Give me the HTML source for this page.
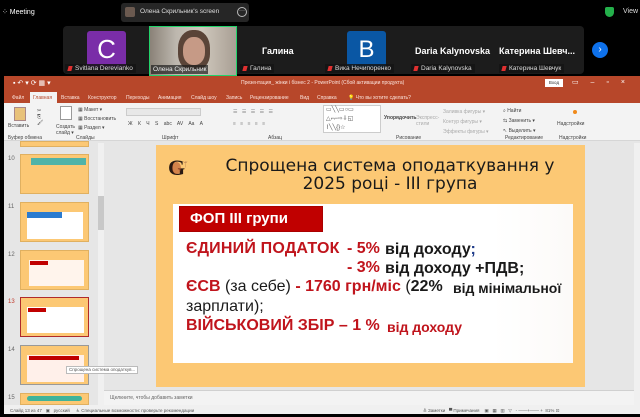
<!DOCTYPE html>
<html><head><meta charset="utf-8"><style>
*{margin:0;padding:0;box-sizing:border-box}
body{width:640px;height:417px;background:#000;overflow:hidden;position:relative;font-family:"Liberation Sans","DejaVu Sans",sans-serif}
.a{position:absolute;white-space:nowrap}
.w{color:#fff}
.lbl{position:absolute;height:9px;background:rgba(20,20,20,.85);color:#ddd;font-size:6.5px;line-height:9px;padding:0 3px 0 10px}
.lbl:before{content:"";position:absolute;left:3px;top:2px;width:4px;height:5px;background:#e03030;transform:skewX(-15deg)}
.tab{position:absolute;top:95px;font-size:5px;color:#fbe3dc}
.rb{position:absolute;font-size:5px;color:#444}
.th{position:absolute;left:20px;width:69px;height:40px;background:#fcc874;border:1px solid #e0b060}
.num{position:absolute;left:8px;font-size:6px;color:#666}
.st{position:absolute;top:408px;font-size:4.5px;color:#555}
.r{color:#c0141c;font-weight:bold;font-size:16px}
.k{color:#1a1a1a;font-weight:bold;font-size:15px}
</style></head><body>
<!-- top bar -->
<div class="a w" style="left:2px;top:8px;font-size:7px">⁘ Meeting</div>
<div class="a" style="left:121px;top:3px;width:128px;height:19px;background:#262626;border-radius:3px"></div>
<div class="a" style="left:125px;top:7px;width:10px;height:10px;background:#6b5a50;border-radius:2px"></div>
<div class="a" style="left:140px;top:8px;font-size:6.5px;color:#ddd">Олена Скрильник's screen</div>
<div class="a" style="left:237px;top:7px;width:10px;height:10px;border:1px solid #bbb;border-radius:50%;font-size:6px;color:#ccc;line-height:7px;text-align:center">···</div>
<div class="a" style="left:605px;top:7px;width:9px;height:10px;background:#24b04b;border-radius:2px 2px 5px 5px"></div>
<div class="a" style="left:623px;top:8px;font-size:7px;color:#ddd">View</div>
<!-- participant strip -->
<div class="a" style="left:63px;top:26px;width:521px;height:48px;background:#1c1c1c;border-radius:4px"></div>
<div class="a" style="left:87px;top:31px;width:39px;height:37px;background:#7a2da8;border-radius:3px;color:#fff;font-size:26px;text-align:center;line-height:37px">C</div>
<div class="lbl" style="left:65px;top:64px">Svitlana Derevianko</div>
<div class="a" style="left:149px;top:26px;width:88px;height:50px;border:1.5px solid #22d36a;background:linear-gradient(90deg,#8a8278 0%,#bdb7ae 30%,#cfc8bd 60%,#a99f94 100%)"></div>
<div class="a" style="left:178px;top:30px;width:32px;height:40px;background:#5a4438;border-radius:45% 45% 40% 40%"></div>
<div class="a" style="left:183px;top:37px;width:22px;height:28px;background:#c69a86;border-radius:45%"></div>
<div class="a" style="left:151px;top:65px;height:9px;font-size:6.5px;line-height:9px;color:#eee;background:rgba(30,30,30,.7);padding:0 2px">Олена Скрильник</div>
<div class="a w" style="left:262px;top:46px;font-size:9px;font-weight:bold">Галина</div>
<div class="lbl" style="left:240px;top:64px">Галина</div>
<div class="a" style="left:347px;top:31px;width:39px;height:37px;background:#0a57a4;border-radius:3px;color:#fff;font-size:24px;text-align:center;line-height:37px">B</div>
<div class="lbl" style="left:325px;top:64px">Вика Нечипоренко</div>
<div class="a w" style="left:415px;top:46px;font-size:9px;font-weight:bold">Daria Kalynovska</div>
<div class="lbl" style="left:411px;top:64px">Daria Kalynovska</div>
<div class="a w" style="left:499px;top:46px;font-size:9px;font-weight:bold">Катерина Шевч...</div>
<div class="lbl" style="left:499px;top:64px">Катерина Шевчук</div>
<div class="a" style="left:592px;top:42px;width:16px;height:16px;background:#0e71eb;border-radius:50%;color:#fff;font-size:10px;text-align:center;line-height:15px">›</div>
<!-- PowerPoint -->
<div class="a" style="left:4px;top:76px;width:636px;height:337px;background:#e6e6e6"></div>
<div class="a" style="left:4px;top:76px;width:636px;height:27px;background:#b7472a"></div>
<div class="a" style="left:13px;top:79px;font-size:7px;color:#fff">▪ ↶ ▾ ⟳ ▦ ▾</div>
<div class="a" style="left:241px;top:80px;font-size:5px;color:#fbe3dc">Презентация_ жінки і бізнес 2 - PowerPoint (Сбой активации продукта)</div>
<div class="a" style="left:545px;top:79px;width:18px;height:8px;background:#fff;font-size:4.5px;color:#333;text-align:center;line-height:8px">Вход</div>
<div class="a" style="left:572px;top:78px;font-size:7px;color:#fff;word-spacing:10px">▭ – ▫ ×</div>
<div class="tab" style="left:12px">Файл</div>
<div class="a" style="left:30px;top:92px;width:27px;height:11px;background:#f3f3f3"></div>
<div class="tab" style="left:33px;color:#b7472a">Главная</div>
<div class="tab" style="left:61px">Вставка</div>
<div class="tab" style="left:88px">Конструктор</div>
<div class="tab" style="left:126px">Переходы</div>
<div class="tab" style="left:158px">Анимация</div>
<div class="tab" style="left:191px">Слайд шоу</div>
<div class="tab" style="left:226px">Запись</div>
<div class="tab" style="left:250px">Рецензирование</div>
<div class="tab" style="left:300px">Вид</div>
<div class="tab" style="left:317px">Справка</div>
<div class="tab" style="left:348px">💡 Что вы хотите сделать?</div>
<div class="a" style="left:4px;top:103px;width:636px;height:38px;background:#f3f3f3;border-bottom:1px solid #d6d6d6"></div>
<div class="a" style="left:14px;top:107px;width:12px;height:14px;background:#e8c27a;border:1px solid #a88"></div>
<div class="rb" style="left:8px;top:123px">Вставить</div>
<div class="rb" style="left:37px;top:108px">✂<br>⎘<br>🖌</div>
<div class="rb" style="left:8px;top:135px">Буфер обмена</div>
<div class="a" style="left:60px;top:106px;width:12px;height:14px;background:#fff;border:1px solid #999"></div>
<div class="rb" style="left:56px;top:124px">Создать<br>слайд ▾</div>
<div class="rb" style="left:78px;top:106px;line-height:9px">▦ Макет ▾<br>▦ Восстановить<br>▦ Раздел ▾</div>
<div class="rb" style="left:76px;top:135px">Слайды</div>
<div class="a" style="left:126px;top:108px;width:75px;height:8px;background:#e8e8e8;border:1px solid #ccc"></div>
<div class="rb" style="left:128px;top:121px;word-spacing:4px">Ж К Ч S abc AV Aa A</div>
<div class="rb" style="left:162px;top:135px">Шрифт</div>
<div class="rb" style="left:233px;top:109px;word-spacing:3px;color:#888">☰ ☰ ☰ ☰ ☰</div>
<div class="rb" style="left:233px;top:121px;word-spacing:3px;color:#888">≡ ≡ ≡ ≡ ≡</div>
<div class="rb" style="left:268px;top:135px">Абзац</div>
<div class="a" style="left:323px;top:105px;width:58px;height:28px;background:#fff;border:1px solid #ccc;font-size:6px;color:#555;line-height:9px;padding-left:2px">▭╲╲▭○▭<br>△⌐⌐⇨⇩◱<br>⌇╲╲{}☆</div>
<div class="rb" style="left:384px;top:115px;font-weight:bold">Упорядочить</div>
<div class="rb" style="left:416px;top:115px;color:#aaa">Экспресс-<br>стили</div>
<div class="rb" style="left:443px;top:107px;color:#aaa;line-height:10px">Заливка фигуры ▾<br>Контур фигуры ▾<br>Эффекты фигуры ▾</div>
<div class="rb" style="left:396px;top:135px">Рисование</div>
<div class="rb" style="left:503px;top:106px;line-height:10px">⌕ Найти<br>⇆ Заменить ▾<br>↖ Выделить ▾</div>
<div class="rb" style="left:505px;top:135px">Редактирование</div>
<div class="a" style="left:573px;top:110px;width:4px;height:4px;background:#f08a1a;border-radius:50%"></div>
<div class="rb" style="left:557px;top:121px">Надстройки</div>
<div class="rb" style="left:559px;top:135px">Надстройки</div>
<!-- thumbnails panel -->
<div class="a" style="left:4px;top:141px;width:100px;height:264px;background:#e6e6e6"></div>
<div class="a" style="left:98px;top:143px;width:6px;height:262px;background:#f0f0f0"></div>
<div class="a" style="left:98px;top:196px;width:6px;height:34px;background:#c8c8c8"></div>
<div class="th" style="top:141px;height:6px"></div>
<div class="num" style="top:156px">10</div><div class="th" style="top:154px"><div class="a" style="left:10px;top:3px;width:55px;height:7px;background:#4fb3a8"></div></div>
<div class="num" style="top:204px">11</div><div class="th" style="top:202px"><div class="a" style="left:6px;top:9px;width:56px;height:27px;background:#fff"></div><div class="a" style="left:6px;top:9px;width:35px;height:6px;background:#2a7bd0"></div></div>
<div class="num" style="top:252px">12</div><div class="th" style="top:250px"><div class="a" style="left:8px;top:9px;width:55px;height:26px;background:#fff4ec"></div><div class="a" style="left:9px;top:10px;width:18px;height:4px;background:#c00000"></div></div>
<div class="num" style="top:299px;color:#c0392b">13</div><div class="th" style="top:297px;border:1.5px solid #b02a2a"><div class="a" style="left:6px;top:9px;width:57px;height:26px;background:#fff"></div><div class="a" style="left:7px;top:10px;width:18px;height:4px;background:#c00000"></div></div>
<div class="num" style="top:347px">14</div><div class="th" style="top:345px;border:1px solid #999"><div class="a" style="left:6px;top:9px;width:57px;height:27px;background:#fff0ea"></div><div class="a" style="left:8px;top:10px;width:50px;height:4px;background:#c00000"></div></div>
<div class="a" style="left:66px;top:366px;height:8px;padding:0 2px;background:#fff;border:1px solid #bbb;font-size:4.5px;color:#555;line-height:6px">Спрощена система оподаткув...</div>
<div class="num" style="top:395px">15</div><div class="th" style="top:393px;height:12px"><div class="a" style="left:6px;top:2px;width:55px;height:5px;background:#3fb39a;border-radius:3px"></div></div>
<!-- slide -->
<div class="a" style="left:156px;top:145px;width:429px;height:242px;background:#fcc874"></div>
<div class="a" style="left:168px;top:158px;font-family:'Liberation Serif',serif;font-weight:bold;font-size:22px;line-height:20px;color:#2a1a12">G</div>
<div class="a" style="left:172px;top:162px;width:9px;height:12px;background:#b04a2a;border-radius:50%;opacity:.55"></div>
<div class="a" style="left:183px;top:160px;font-size:8px;color:#b07a50">ᛘ</div>
<div class="a" style="left:205px;top:157px;width:370px;text-align:center;font-family:'DejaVu Sans',sans-serif;font-size:17px;line-height:18px;color:#1a1a1a">Спрощена система оподаткування у<br>2025 році - III група</div>
<div class="a" style="left:173px;top:204px;width:400px;height:159px;background:linear-gradient(90deg,#fff 0%,#fff 80%,#fcfaf8 100%)"></div>
<div class="a" style="left:179px;top:206px;width:144px;height:26px;background:#c00000;border:1px solid #a00;color:#fff;font-weight:bold;font-size:15px;line-height:24px;padding-left:10px">ФОП III групи</div>
<div class="a r" style="left:186px;top:240px;letter-spacing:.2px">ЄДИНИЙ ПОДАТОК</div>
<div class="a r" style="left:347px;top:240px">- 5%</div>
<div class="a k" style="left:385px;top:241px;font-size:16px">від доходу<span style="color:#1f3c8a">;</span></div>
<div class="a r" style="left:347px;top:259px">- 3%</div>
<div class="a k" style="left:385px;top:260px;font-size:16px">від доходу +ПДВ;</div>
<div class="a r" style="left:186px;top:278px">ЄСВ <span style="color:#1a1a1a;font-weight:normal">(за себе)</span> - 1760 грн/міс <span style="color:#1a1a1a;font-weight:normal">(</span><span style="color:#1a1a1a">22%</span></div>
<div class="a k" style="left:453px;top:280px;font-size:14px">від мінімальної</div>
<div class="a" style="left:186px;top:298px;font-size:16px;color:#1a1a1a">зарплати);</div>
<div class="a r" style="left:186px;top:317px">ВІЙСЬКОВИЙ ЗБІР – 1 %</div>
<div class="a r" style="left:387px;top:319px;font-size:14px">від доходу</div>
<!-- notes & status -->
<div class="a" style="left:104px;top:390px;width:530px;height:15px;background:#f3f3f3;border-top:1px solid #d0d0d0"></div>
<div class="a" style="left:110px;top:395px;font-size:5px;color:#666">Щелкните, чтобы добавить заметки</div>
<div class="a" style="left:634px;top:143px;width:6px;height:262px;background:#f0f0f0"></div>
<div class="a" style="left:4px;top:405px;width:636px;height:9px;background:#f0f0f0"></div>
<div class="st" style="left:10px">Слайд 13 из 47 &nbsp; ▣ &nbsp; русский &nbsp;&nbsp;&nbsp; ♿ Специальные возможности: проверьте рекомендации</div>
<div class="st" style="left:423px">≜ Заметки &nbsp; ▀ Примечания &nbsp;&nbsp; ▣ &nbsp; ▦ &nbsp; ▥ &nbsp; ▽ &nbsp; - ——+—— + &nbsp;81% ⊡</div>
<div class="a" style="left:0;top:414px;width:640px;height:3px;background:#000"></div>
</body></html>
